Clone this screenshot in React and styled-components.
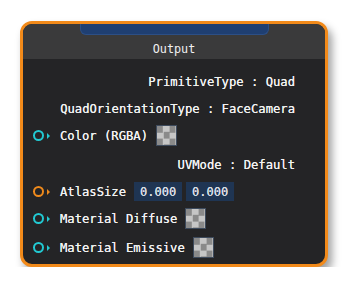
import React from 'react'
import styled, { createGlobalStyle } from 'styled-components'

const Global = createGlobalStyle`
body {
  margin: 0;
  background: #ffffff;
  font-family: 'DejaVu Sans Mono', 'Liberation Mono', monospace;
}
`

const Page = styled.div`
padding: 21px 0 0 20px;
`

const Node = styled.div`
width: 302px;
height: 240px;
border: 3px solid #f28a1a;
border-radius: 12px;
background: #242426;
overflow: hidden;
box-shadow: 4px 6px 8px rgba(0,0,0,0.38);
display: flex;
flex-direction: column;
`

const Header = styled.div`
height: 35px;
background: #3a3a3b;
display: flex;
flex-direction: column;
align-items: center;
flex-shrink: 0;
`

const Tab = styled.div`
width: 187px;
height: 10px;
background: #1f3f72;
border: 1px solid #2c4f86;
border-top: none;
border-radius: 0 0 6px 6px;
`

const Title = styled.div`
color: #f0f0f0;
font-size: 11.8px;
margin-top: 7px;
`

const Body = styled.div`
padding: 9px 30px 0 10px;
display: flex;
flex-direction: column;
`

const Row = styled.div`
height: 27px;
margin-top: ${p => p.$mt || 0}px;
display: flex;
align-items: center;
justify-content: ${p => p.$right ? 'flex-end' : 'flex-start'};
color: #f2f2f2;
font-size: 12.2px;
white-space: pre;
text-shadow: 0 0 0.4px #f2f2f2;
`

const Pin = styled.div`
width: 7px;
height: 7px;
border: 2.5px solid ${p => p.$color};
border-radius: 50%;
flex-shrink: 0;
`

const Arrow = styled.div`
width: 0;
height: 0;
border-top: 3px solid transparent;
border-bottom: 3px solid transparent;
border-left: 3px solid ${p => p.$color};
margin: 0 10px 0 3px;
`

const Swatch = styled.div`
width: 19px;
height: 19px;
margin-left: 8px;
border: 1px solid #3d4a5c;
background: repeating-conic-gradient(#c6c6c6 0 25%, #8a8a8a 0 50%) 0 0 / 12.6px 12.6px;
`

const NumBox = styled.div`
width: 48px;
height: 19px;
margin-left: ${p => p.$ml}px;
background: #1f3553;
color: #d6dce4;
display: flex;
align-items: center;
justify-content: center;
font-size: 12px;
`

const CYAN = '#22c9d2'
const ORANGE = '#ef8a1c'

const PinRow = ({ color, label, children, mt }) => (
    <Row $mt={mt}>
        <Pin $color={color} />
        <Arrow $color={color} />
        {label}
        {children}
    </Row>
)

export default function App() {
    return (
        <Page>
            <Global />
            <Node>
                <Header>
                    <Tab />
                    <Title>Output</Title>
                </Header>
                <Body>
                    <Row $right>PrimitiveType : Quad</Row>
                    <Row $right>QuadOrientationType : FaceCamera</Row>
                    <PinRow color={CYAN} label="Color (RGBA)"><Swatch /></PinRow>
                    <Row $right $mt={2}>UVMode : Default</Row>
                    <PinRow color={ORANGE} label="AtlasSize">
                        <NumBox $ml={8}>0.000</NumBox>
                        <NumBox $ml={4}>0.000</NumBox>
                    </PinRow>
                    <PinRow color={CYAN} label="Material Diffuse"><Swatch /></PinRow>
                    <PinRow color={CYAN} label="Material Emissive" mt={2}><Swatch /></PinRow>
                </Body>
            </Node>
        </Page>
    )
}
